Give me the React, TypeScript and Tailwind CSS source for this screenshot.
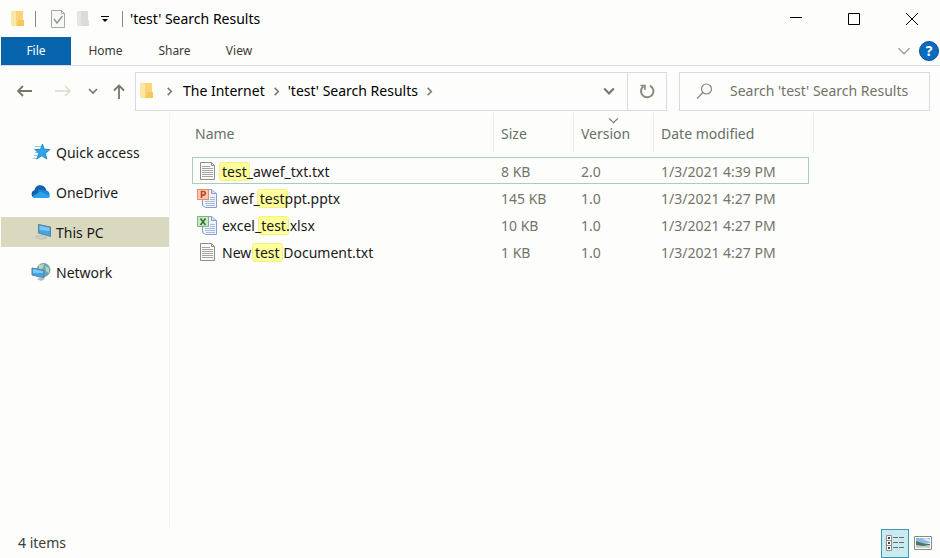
import type { ReactNode } from "react";

type FileKind = "txt" | "ppt" | "xls";

const files: { kind: FileKind; parts: [string, string, string]; size: string; version: string; date: string }[] = [
  { kind: "txt", parts: ["", "test", "_awef_txt.txt"], size: "8 KB", version: "2.0", date: "1/3/2021 4:39 PM" },
  { kind: "ppt", parts: ["awef_", "test", "ppt.pptx"], size: "145 KB", version: "1.0", date: "1/3/2021 4:27 PM" },
  { kind: "xls", parts: ["excel_", "test", ".xlsx"], size: "10 KB", version: "1.0", date: "1/3/2021 4:27 PM" },
  { kind: "txt", parts: ["New ", "test", " Document.txt"], size: "1 KB", version: "1.0", date: "1/3/2021 4:27 PM" },
];

function FolderIcon() {
  return (
    <svg width="14" height="18" viewBox="0 0 14 18" className="shrink-0">
      <path d="M1 1h11v15H1z" fill="#f8dc8a" />
      <path d="M5 1h7v9l1 1v5H5z" fill="#fbd478" />
      <path d="M7 10h6v6H6z" fill="#f5c65a" />
      <path d="M0 1l5 1v14l-5-1z" fill="#fae7a4" />
    </svg>
  );
}

function Chevron({ dir, size, width, color }: { dir: "down" | "right"; size: number; width: number; color: string }) {
  return (
    <svg width={size} height={size} viewBox="0 0 10 10" fill="none" stroke={color} strokeWidth={width} className="shrink-0">
      <path d={dir === "down" ? "M1 3l4 4 4-4" : "M3 1l4 4-4 4"} />
    </svg>
  );
}

function DocIcon({ kind }: { kind: FileKind }) {
  if (kind === "txt") {
    return (
      <svg width="20" height="20" viewBox="0 0 20 20" className="shrink-0">
        <path d="M3.500.500h11l3 3v14h-14z" fill="#fafaf6" stroke="#8f8f88" />
        <path d="M14.500.500v3h3" fill="none" stroke="#8f8f88" />
        <path d="M5 4.500h8M5 6.500h11M5 8.500h11M5 10.500h11M5 12.500h11M5 14.500h11" stroke="#a5a59f" />
      </svg>
    );
  }
  const ppt = kind === "ppt";
  return (
    <svg width="20" height="20" viewBox="0 0 20 20" className="shrink-0">
      <path d="M5.500.500h9l5 4v14h-11l-3-2z" fill="#eef2fb" stroke="#8b9ccb" />
      <path d="M14.500.500v4h5" fill="#cfdcf5" stroke="#8b9ccb" />
      <path d="M8 12.500h10M8 14.500h10M9 16.500h9M13 8.500h5M13 10.500h5" stroke="#a9bbdf" />
      <rect x="0.500" y="0.500" width="11" height="10" fill={ppt ? "#f6c9b0" : "#cbe6c4"} stroke={ppt ? "#e58f66" : "#86b583"} />
      {ppt ? (
        <path d="M4.500 9V2.500h2a1.800 1.800 0 0 1 0 3.600h-2" fill="none" stroke="#c5441d" strokeWidth="1.600" />
      ) : (
        <path d="M3.500 2.500l5 6.500M8.500 2.500l-5 6.500" fill="none" stroke="#2c7a36" strokeWidth="1.600" />
      )}
    </svg>
  );
}

function StarIcon() {
  return (
    <svg width="20" height="18" viewBox="0 0 20 18">
      <path d="M4 3.500h6M3 6.500h4M4 9.500h3M3 12.500h3M2 15.500h4" stroke="#8fcfdc" />
      <path d="M11.500 1l1.700 5 5.800.6-4.500 3.600 1.300 5.800-5-3.200-5 3.200 1.900-5.700L4 6.600l5.500-.4z" fill="#30a4ea" stroke="#1580bd" strokeWidth=".8" />
    </svg>
  );
}

function CloudIcon() {
  return (
    <svg width="20" height="16" viewBox="0 0 20 16">
      <path d="M4 14a4 4 0 0 1-.5-7.800A6 6 0 0 1 14.500 4L16 8l-4 6z" fill="#0f61ad" />
      <path d="M7 5.500l8 1a4 4 0 0 1 1.500 7.500H8z" fill="#1d86d4" />
      <path d="M1 12.500l8.500-5L19 12a2.600 2.600 0 0 1-2.500 2H4a4 4 0 0 1-3-1.500z" fill="#28a3e9" />
    </svg>
  );
}

function PcIcon() {
  return (
    <svg width="20" height="18" viewBox="0 0 20 18">
      <path d="M7.500 1.500l12 2.500v9.500L7.500 10z" fill="#3fa6ea" stroke="#607f92" />
      <path d="M8.500 2.700l10 2.200v3L8.500 7z" fill="#7cc6f4" />
      <path d="M4 13.500l6-1 6 2.500-6 1.500z" fill="#d0d2c6" stroke="#b4b8b0" strokeWidth=".7" />
    </svg>
  );
}

function NetworkIcon() {
  return (
    <svg width="20" height="20" viewBox="0 0 20 20">
      <circle cx="12.500" cy="8" r="6.500" fill="#6aa5bd" stroke="#6d99a6" />
      <path d="M8 3l5-1-1 4-4 2zM14 4l4 2v5l-3-2z" fill="#b7d5b4" />
      <path d="M1 6l12 2.500v7.500L1 13z" fill="#3fa3e6" stroke="#4e829f" />
      <path d="M2 7l10 2v2L2 11z" fill="#7cc8f4" />
      <path d="M6 17l4-2 4 2-4 2z" fill="#b3bcb8" />
    </svg>
  );
}

const places: { name: string; icon: ReactNode; current?: boolean }[] = [
  { name: "Quick access", icon: <StarIcon /> },
  { name: "OneDrive", icon: <CloudIcon /> },
  { name: "This PC", icon: <PcIcon />, current: true },
  { name: "Network", icon: <NetworkIcon /> },
];

function TitleBar() {
  return (
    <header className="flex h-[37px] items-center pl-[11px] text-black">
      <FolderIcon />
      <span className="ml-2.5 h-4 w-px bg-[#8a8a82]" />
      <button aria-label="Properties" className="ml-3.5">
        <svg width="16" height="18" viewBox="0 0 16 18" fill="none">
          <path d="M1.500.500h10l3 3v14h-13z" fill="#f8f8f4" stroke="#a6aaa6" />
          <path d="M11.500.500v3h3" stroke="#a6aaa6" />
          <path d="M4 9l3 4 5.500-7" stroke="#8b9c9d" strokeWidth="1.500" />
        </svg>
      </button>
      <button aria-label="New folder" className="ml-2.5">
        <svg width="14" height="18" viewBox="0 0 14 18">
          <path d="M1 1h11v15H1z" fill="#e4e6e2" />
          <path d="M5 1h7v9l1 1v5H5z" fill="#dadcd8" />
        </svg>
      </button>
      <button aria-label="Customize Quick Access Toolbar" className="ml-[11px]">
        <svg width="8" height="8" viewBox="0 0 8 8">
          <path d="M0 1.500h8" stroke="#000" />
          <path d="M1 4h6L4 7z" />
        </svg>
      </button>
      <span className="ml-[13px] h-4 w-px bg-[#8a8a82]" />
      <h1 className="ml-[7px] grow text-sm">'test' Search Results</h1>
      <div className="flex items-center gap-[46px] pr-[22px]">
        <button aria-label="Minimize">
          <svg width="12" height="12" viewBox="0 0 12 12"><path d="M0 4.500h12" stroke="#000" /></svg>
        </button>
        <button aria-label="Maximize">
          <svg width="12" height="12" viewBox="0 0 12 12"><path d="M.500.500h11v11H.500z" fill="none" stroke="#000" /></svg>
        </button>
        <button aria-label="Close">
          <svg width="12" height="12" viewBox="0 0 12 12"><path d="M0 0l12 12M12 0L0 12" stroke="#000" /></svg>
        </button>
      </div>
    </header>
  );
}

function Ribbon() {
  return (
    <nav className="flex h-[29px] items-stretch border-b border-[#d9d9e2] pl-px text-xs text-[#3a3a36]">
      <button className="w-[70px] bg-[#0564ab] text-white">File</button>
      <button className="w-[69px]">Home</button>
      <button className="w-[69px]">Share</button>
      <button className="w-[60px]">View</button>
      <div className="ml-auto flex items-center gap-2 pr-px">
        <button aria-label="Expand the ribbon">
          <Chevron dir="down" size={14} width={1} color="#a0a094" />
        </button>
        <button aria-label="Help" className="flex size-5 items-center justify-center rounded-full border border-[#05508f] bg-[#0a6ac0] text-sm font-bold text-white">
          ?
        </button>
      </div>
    </nav>
  );
}

function AddressBar() {
  return (
    <div className="flex h-[47px] items-center pr-2.5 pt-[3px] text-sm">
      <div className="flex w-[135px] shrink-0 items-center pl-4">
        <button aria-label="Back">
          <svg width="16" height="14" viewBox="0 0 16 14" fill="none" stroke="#77776b" strokeWidth="1.800"><path d="M16 7H2M7 2L2 7l5 5" /></svg>
        </button>
        <button aria-label="Forward" className="ml-[23px]">
          <svg width="16" height="14" viewBox="0 0 16 14" fill="none" stroke="#dcdcca" strokeWidth="1.500"><path d="M0 7h15M10 2l5 5-5 5" /></svg>
        </button>
        <button aria-label="Recent locations" className="ml-[17px]">
          <Chevron dir="down" size={10} width={1.7} color="#77776b" />
        </button>
        <button aria-label="Up" className="ml-3.5">
          <svg width="14" height="16" viewBox="0 0 14 16" fill="none" stroke="#77776b" strokeWidth="1.800"><path d="M7 16V2.500M2 7.500l5-5 5 5" /></svg>
        </button>
      </div>
      <div className="flex h-[39px] min-w-0 grow items-stretch border border-[#d9d9e2]">
        <div className="flex min-w-0 grow items-center pl-1 text-black">
          <FolderIcon />
          <span className="ml-[11px]"><Chevron dir="right" size={9} width={1.7} color="#77776b" /></span>
          <a href="#internet" className="ml-[9px] whitespace-nowrap">The Internet</a>
          <span className="ml-[7px]"><Chevron dir="right" size={9} width={1.7} color="#77776b" /></span>
          <a href="#results" className="ml-[7px] whitespace-nowrap">'test' Search Results</a>
          <span className="ml-[7px]"><Chevron dir="right" size={9} width={1.7} color="#77776b" /></span>
          <button aria-label="Previous locations" className="ml-auto mr-3">
            <Chevron dir="down" size={12} width={1.8} color="#77776b" />
          </button>
        </div>
        <button aria-label="Refresh" className="flex w-[39px] items-center justify-center border-l border-[#d9d9e2]">
          <svg width="16" height="16" viewBox="0 0 16 16" fill="none" stroke="#88887c" strokeWidth="2">
            <path d="M11 2.600A6.200 6.200 0 1 1 4.500 3.200" />
            <path d="M1.500 2.500h4.500v4.500" strokeWidth="1.600" />
          </svg>
        </button>
      </div>
      <label className="ml-3 flex h-[39px] w-[251px] shrink-0 items-center border border-[#d9d9e2] pl-4">
        <svg width="17" height="17" viewBox="0 0 17 17" fill="none" stroke="#88887c" strokeWidth="1.200" className="shrink-0">
          <circle cx="10.500" cy="6" r="5" />
          <path d="M7 9.500L1 15.500" />
        </svg>
        <input
          type="search"
          aria-label="Search"
          placeholder="Search 'test' Search Results"
          className="ml-[17px] w-full min-w-0 bg-transparent text-sm outline-none placeholder:text-[#72726a]"
        />
      </label>
    </div>
  );
}

function Sidebar() {
  return (
    <aside className="w-[170px] shrink-0 border-r border-[#f3f3f5] pl-px pt-6">
      <ul className="flex flex-col gap-2.5">
        {places.map((p) => (
          <li key={p.name}>
            <a
              href="#place"
              className={
                p.current
                  ? "flex h-[30px] items-center bg-[#d9d9c0] pl-[30px] text-sm text-[#1a1a1a]"
                  : "flex h-[30px] items-center pl-[30px] text-sm text-[#1a1a1a]"
              }
            >
              {p.icon}
              <span className="ml-[5px] pt-0.5">{p.name}</span>
            </a>
          </li>
        ))}
      </ul>
    </aside>
  );
}

function FileTable() {
  return (
    <main className="grow pl-[22px]">
      <table className="w-[622px] table-fixed border-separate border-spacing-0 text-left text-sm text-[#74746a]">
        <colgroup>
          <col className="w-[302px]" />
          <col className="w-20" />
          <col className="w-20" />
          <col className="w-[155px]" />
          <col className="w-[5px]" />
        </colgroup>
        <thead>
          <tr className="h-[39px] text-[#667066] [&>th]:pt-0.5">
            <th className="border-r border-[#ebebf0] pl-[3px] font-normal">Name</th>
            <th className="border-r border-[#ebebf0] pl-[7px] font-normal">Size</th>
            <th className="relative border-r border-[#ebebf0] pl-[7px] font-normal">
              Version
              <span className="absolute inset-x-0 top-0.5 flex justify-center">
                <Chevron dir="down" size={11} width={1} color="#77776b" />
              </span>
            </th>
            <th colSpan={2} className="border-r border-[#ebebf0] pl-[7px] font-normal">Date modified</th>
          </tr>
          <tr aria-hidden="true" className="h-[5px]">
            <td colSpan={5} />
          </tr>
        </thead>
        <tbody className="[&_td]:pt-0.5">
          {files.map((f, i) => {
            const edge = i === 0 ? "border-y border-[#a6cfc4]" : "border-transparent";
            return (
              <tr key={f.parts.join("")} className="h-[27px]">
                <td className={`${edge} border-l pl-1 text-[#1a1a1a]`}>
                  <div className="flex items-center gap-[5px]">
                    <DocIcon kind={f.kind} />
                    <span className="isolate whitespace-pre">
                      {f.parts[0]}
                      <mark className="relative bg-transparent text-[#1a1a1a] before:absolute before:-inset-x-[3px] before:inset-y-0 before:-z-10 before:rounded-[3px] before:border before:border-[#f5f180] before:bg-[#ffff9b]">{f.parts[1]}</mark>
                      {f.parts[2]}
                    </span>
                  </div>
                </td>
                <td className={`${edge} pl-[7px]`}>{f.size}</td>
                <td className={`${edge} pl-[7px]`}>{f.version}</td>
                <td className={`${edge} whitespace-nowrap border-r pl-[7px]`}>{f.date}</td>
                <td />
              </tr>
            );
          })}
        </tbody>
      </table>
    </main>
  );
}

function StatusBar() {
  return (
    <footer className="flex h-[30px] items-center justify-between pl-[18px] text-sm text-[#3c3c38]">
      <span>4 items</span>
      <div className="flex items-center pr-2">
        <button aria-label="Details view" className="flex h-[29px] w-7 items-center justify-center border border-[#3f97ad] bg-[#c9eaf0]">
          <svg width="20" height="18" viewBox="0 0 20 18" fill="none">
            <path d="M1.500 1.500h5v5h-5zM1.500 6.500h5v5h-5zM1.500 11.500h5v5h-5z" fill="#fff" stroke="#8c8c82" />
            <path d="M3 4h2M3 9h2M3 14h2" stroke="#444" strokeWidth="2" />
            <path d="M8 3.500h5M14 3.500h5M8 8.500h5M14 8.500h5M8 13.500h5M14 13.500h5" stroke="#66706e" />
          </svg>
        </button>
        <button aria-label="Large icons view" className="ml-[5px]">
          <svg width="18" height="14" viewBox="0 0 18 14">
            <path d="M.500.500h17v13H.500z" fill="#fff" stroke="#8b8b86" />
            <path d="M2 2h14v5H2z" fill="#8fbbe6" />
            <path d="M8 3l5-1 3 2v2z" fill="#dcebf8" />
            <path d="M2 5l6 2 8 1v4H2z" fill="#4f7563" />
            <path d="M2 9l7 1 7-1v3H2z" fill="#c5d3cc" />
          </svg>
        </button>
      </div>
    </footer>
  );
}

export default function App() {
  return (
    <div className="flex min-h-screen flex-col bg-[#fdfdfb] font-['Noto_Sans','Open_Sans',sans-serif]">
      <TitleBar />
      <Ribbon />
      <AddressBar />
      <div className="flex grow">
        <Sidebar />
        <FileTable />
      </div>
      <StatusBar />
    </div>
  );
}
